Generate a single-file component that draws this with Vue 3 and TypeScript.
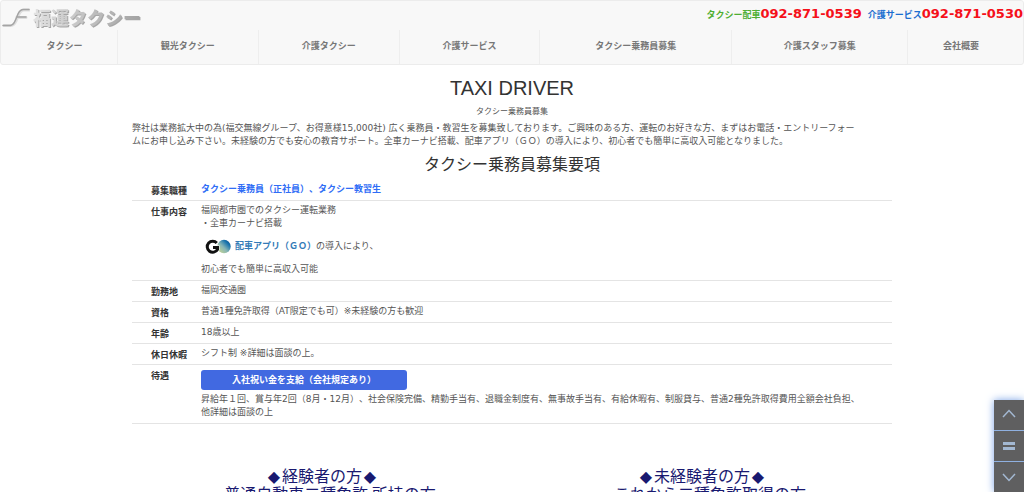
<script setup lang="ts">
interface Phone {
  label: string
  number: string
  kind: string
}

interface Audience {
  title: string
  text: string
}

const phones: Phone[] = [
  { label: 'タクシー配車', number: '092-871-0539', kind: 'dispatch' },
  { label: '介護サービス', number: '092-871-0530', kind: 'care' },
]

const menu: string[] = [
  'タクシー',
  '観光タクシー',
  '介護タクシー',
  '介護サービス',
  'タクシー乗務員募集',
  '介護スタッフ募集',
  '会社概要',
]

const audiences: Audience[] = [
  { title: '経験者の方', text: '\u3000普通自動車二種免許 所持の方' },
  { title: '未経験者の方', text: '\u3000これから二種免許取得の方' },
]
</script>

<template>
  <div class="page" lang="ja">
    <header class="header">
      <div class="top">
        <a class="brand" href="#">
          <svg class="mark" viewBox="0 0 28 20" aria-hidden="true">
            <g fill="none" stroke-linecap="round" stroke-linejoin="round">
              <path d="M2 18.500H9Q12 18.500 14 14L16.500 8Q19 3 22 3H27M15 10.500H24" stroke="#dedede" stroke-width="3" />
              <path d="M1 18.500H8.500Q11.500 18 13.500 13L16 7Q18 2.500 21.500 2.500H27M14.500 10H24" stroke="#a4a4a4" stroke-width="1.500" />
            </g>
          </svg>
          <span class="brand-name">福運タクシー</span>
        </a>
        <div class="phones">
          <span v-for="p in phones" :key="p.number" class="phone" :class="p.kind">
            {{ p.label }}<a class="number" :href="'tel:' + p.number">{{ p.number }}</a>
          </span>
        </div>
      </div>
      <nav class="menu">
        <a v-for="item in menu" :key="item" class="menu-item" href="#">{{ item }}</a>
      </nav>
    </header>

    <main class="content">
      <h1>TAXI DRIVER</h1>
      <p class="subtitle">タクシー乗務員募集</p>
      <p class="intro">
        弊社は業務拡大中の為(福交無線グループ、お得意様15,000社) 広く乗務員・教習生を募集致しております。ご興味のある方、運転のお好きな方、まずはお電話・エントリーフォー<br>ムにお申し込み下さい。未経験の方でも安心の教育サポート。全車カーナビ搭載、配車アプリ（ＧＯ）の導入により、初心者でも簡単に高収入可能となりました。
      </p>
      <h2>タクシー乗務員募集要項</h2>

      <table class="details">
        <tbody>
          <tr>
            <th scope="row">募集職種</th>
            <td class="jobs">タクシー乗務員（正社員）、タクシー教習生</td>
          </tr>
          <tr>
            <th scope="row">仕事内容</th>
            <td>
              福岡都市圏でのタクシー運転業務<br>・全車カーナビ搭載
              <div class="app">
                <svg class="go" viewBox="0 0 26 16" aria-hidden="true">
                  <defs>
                    <linearGradient id="globe" x1="0" y1="1" x2="1" y2="0">
                      <stop offset="0" stop-color="#d3dc8e" />
                      <stop offset="0.450" stop-color="#86b5b5" />
                      <stop offset="0.750" stop-color="#1672ad" />
                      <stop offset="1" stop-color="#063b70" />
                    </linearGradient>
                  </defs>
                  <circle cx="19" cy="7.500" r="6.700" fill="url(#globe)" />
                  <path d="M12.300 4.300A5.500 5.500 0 1 0 12.500 10.500V8.500H8" fill="none" stroke="#fff" stroke-width="4" />
                  <path d="M11.800 4A5.500 5.500 0 1 0 12.500 10.500V8.500H8" fill="none" stroke="#111" stroke-width="3" />
                </svg>
                <span><a class="app-link" href="#">配車アプリ（ＧＯ）</a>の導入により、</span>
              </div>
              初心者でも簡単に高収入可能
            </td>
          </tr>
          <tr>
            <th scope="row">勤務地</th>
            <td>福岡交通圏</td>
          </tr>
          <tr>
            <th scope="row">資格</th>
            <td>普通1種免許取得（AT限定でも可）※未経験の方も歓迎</td>
          </tr>
          <tr>
            <th scope="row">年齢</th>
            <td>18歳以上</td>
          </tr>
          <tr>
            <th scope="row">休日休暇</th>
            <td>シフト制 ※詳細は面談の上。</td>
          </tr>
          <tr>
            <th scope="row">待遇</th>
            <td>
              <div class="bonus">入社祝い金を支給（会社規定あり）</div>
              昇給年１回、賞与年2回（8月・12月）、社会保険完備、精勤手当有、退職金制度有、無事故手当有、有給休暇有、制服貸与、普通2種免許取得費用全額会社負担、<br>他詳細は面談の上
            </td>
          </tr>
        </tbody>
      </table>

      <div class="audiences">
        <section v-for="a in audiences" :key="a.title">
          <h3>
            <span class="diamond">◆</span>{{ a.title }}<span class="diamond">◆</span><br>{{ a.text }}
          </h3>
        </section>
      </div>
    </main>

    <div class="scroller">
      <button type="button" aria-label="上へ">
        <svg viewBox="0 0 30 30"><path d="M9 17L15 10.500L21 17" /></svg>
      </button>
      <button type="button" aria-label="メニュー">
        <svg viewBox="0 0 30 30"><path d="M9 12.500H21M9 17.500H21" class="bars" /></svg>
      </button>
      <button type="button" aria-label="下へ">
        <svg viewBox="0 0 30 30"><path d="M9 12L15 18.500L21 12" /></svg>
      </button>
    </div>
  </div>
</template>

<style>
body {
  margin: 0;
  background: #fff;
}
</style>

<style scoped>
.page {
  font-family: "DejaVu Sans", "Noto Sans CJK JP", sans-serif;
  font-size: 9px;
  line-height: 13px;
  text-spacing-trim: space-all;
  color: #555;
}

.page * {
  box-sizing: border-box;
}

a {
  text-decoration: none;
}

.header {
  background: #f8f8f8;
  border: 1px solid #ececec;
  border-radius: 3px;
}

.top {
  display: flex;
  justify-content: space-between;
  height: 29px;
}

.brand {
  display: flex;
  align-items: center;
  gap: 3px;
  padding: 3px 0 0 1px;
}

.mark {
  width: 28px;
  height: 20px;
}

.brand-name {
  font-family: "Noto Sans CJK JP", sans-serif;
  font-size: 18px;
  line-height: 24px;
  font-weight: 900;
  color: transparent;
  background: linear-gradient(to right, #e2e2e2, #c4c4c4 45%, #a2a2a2);
  background-clip: text;
  filter: drop-shadow(1px 1px 0 #a6a6a6);
}

.phones {
  display: flex;
  gap: 6px;
  padding-top: 4px;
  line-height: 17px;
}

.phone {
  font-weight: bold;
}

.dispatch {
  color: #4fae32;
}

.care {
  color: #1c6fd0;
}

.number {
  font-size: 13px;
  color: #f5101a;
}

.menu {
  display: grid;
  grid-template-columns: 106fr 141fr 141fr 141fr 192fr 176fr 106fr;
  padding: 0 9px 0 11px;
}

.menu-item {
  padding: 10px 0 11px;
  border-right: 1px solid #eeeeee;
  text-align: center;
  font-weight: bold;
  color: #777;
}

.menu-item:last-child {
  border-right: 0;
}

.content {
  max-width: 760px;
  margin: 0 auto;
}

h1,
h2,
h3 {
  margin: 0;
  font-weight: normal;
  text-align: center;
  color: #333;
}

h1 {
  padding-top: 11px;
  font-family: "Liberation Sans", Arial, sans-serif;
  font-size: 20px;
  line-height: 24px;
}

.subtitle {
  margin: 6px 0 4px;
  font-size: 8px;
  line-height: 12px;
  text-align: center;
}

.intro {
  margin: 0;
}

h2 {
  padding-top: 4px;
  font-family: "Noto Sans CJK JP", sans-serif;
  font-size: 16px;
  line-height: 22px;
}

.details {
  width: 100%;
  margin-top: 6px;
  border-collapse: collapse;
}

.details th,
.details td {
  border-bottom: 1px solid #e4e4e4;
  text-align: left;
  vertical-align: top;
}

.details th {
  width: 69px;
  padding: 5px 0 2px 19px;
  color: #333;
}

.details td {
  padding: 3px 0 4px;
}

.details .jobs {
  font-weight: bold;
  color: #2f6df6;
}

.app {
  display: flex;
  align-items: center;
  gap: 4px;
  height: 33px;
  padding-left: 4px;
}

.go {
  width: 26px;
  height: 16px;
}

.app-link {
  font-weight: bold;
  color: #337ab7;
}

.bonus {
  width: 206px;
  margin: 2px 0 3px;
  border-radius: 3px;
  background: #4169e1;
  color: #fff;
  font-weight: bold;
  line-height: 20px;
  text-align: center;
}

.audiences {
  display: grid;
  grid-template-columns: 1fr 1fr;
  padding-top: 43px;
}

h3 {
  font-family: "Noto Sans CJK JP", sans-serif;
  font-size: 16px;
  line-height: 17px;
  color: #191970;
}

.diamond {
  display: inline-block;
  width: 16px;
  font-family: "DejaVu Sans", sans-serif;
}

.scroller {
  position: fixed;
  right: 0;
  bottom: 0;
  display: grid;
  gap: 1px;
  background: #8fb0e0;
  box-shadow: 0 0 8px #7ba3e6;
}

.scroller button {
  width: 30px;
  height: 30px;
  padding: 0;
  border: 0;
  background: #5f5f60;
}

.scroller svg {
  display: block;
  width: 30px;
  height: 30px;
  fill: none;
  stroke: #a3b8d2;
  stroke-width: 1.500;
}

.scroller .bars {
  stroke-width: 3;
}
</style>
